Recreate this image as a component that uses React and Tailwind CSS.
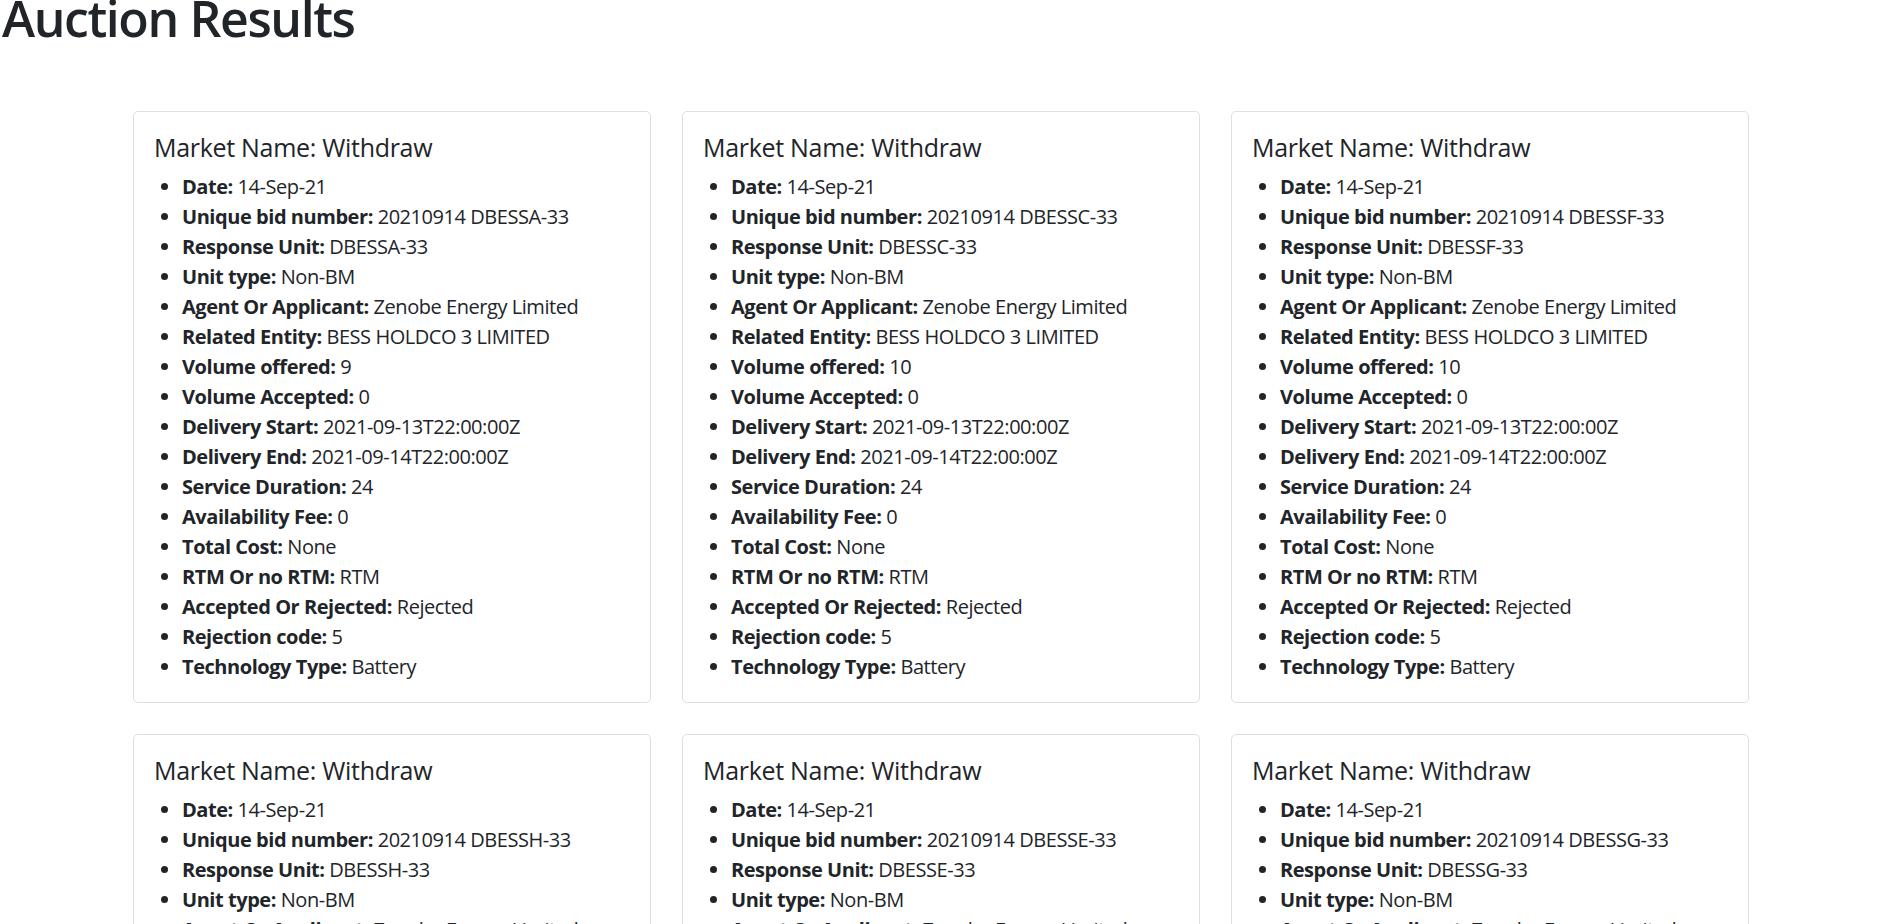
import React from 'react';

const results = [
  { unit: 'DBESSA-33', volume: 9 },
  { unit: 'DBESSC-33', volume: 10 },
  { unit: 'DBESSF-33', volume: 10 },
  { unit: 'DBESSH-33', volume: 10 },
  { unit: 'DBESSE-33', volume: 10 },
  { unit: 'DBESSG-33', volume: 10 },
];

const fieldsFor = (r) => [
  ['Date', '14-Sep-21'],
  ['Unique bid number', `20210914 ${r.unit}`],
  ['Response Unit', r.unit],
  ['Unit type', 'Non-BM'],
  ['Agent Or Applicant', 'Zenobe Energy Limited'],
  ['Related Entity', 'BESS HOLDCO 3 LIMITED'],
  ['Volume offered', r.volume],
  ['Volume Accepted', 0],
  ['Delivery Start', '2021-09-13T22:00:00Z'],
  ['Delivery End', '2021-09-14T22:00:00Z'],
  ['Service Duration', 24],
  ['Availability Fee', 0],
  ['Total Cost', 'None'],
  ['RTM Or no RTM', 'RTM'],
  ['Accepted Or Rejected', 'Rejected'],
  ['Rejection code', 5],
  ['Technology Type', 'Battery'],
];

const ResultCard = ({ result }) => (
  <div className="bg-white border border-[#dfdfdf] rounded-[5px] p-[20px]">
    <h5 className="text-[25px] leading-[30px] mb-[10px] font-normal tracking-[-0.3px]">Market Name: Withdraw</h5>
    <ul className="list-disc pl-[28px] text-[20px] leading-[30px] tracking-[-0.45px]">
      {fieldsFor(result).map(([label, value]) => (
        <li key={label}>
          <strong className="font-bold">{label}:</strong> {value}
        </li>
      ))}
    </ul>
  </div>
);

const App = () => {
  return (
    <div className="min-h-screen bg-white text-[#212529] font-['Open_Sans',sans-serif]">
      <h1 className="text-[50px] leading-[60px] font-semibold tracking-[-1.4px] -mt-[12px] pl-[2px]">Auction Results</h1>

      <div className="pt-[63px] pl-[133px]">
        <div className="grid grid-cols-[repeat(3,518px)] gap-x-[31px] gap-y-[31px]">
          {results.map((r) => (
            <ResultCard key={r.unit} result={r} />
          ))}
        </div>
      </div>
    </div>
  );
};

export default App;
